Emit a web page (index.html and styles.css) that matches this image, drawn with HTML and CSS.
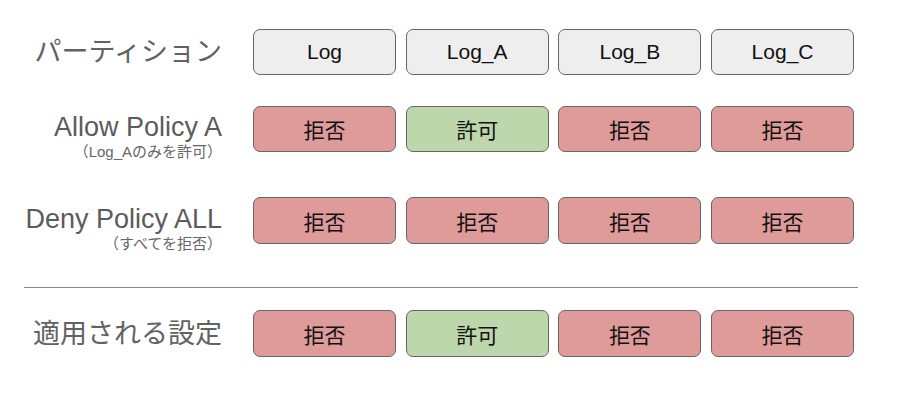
FILE: index.html
```html
<!DOCTYPE html>
<html lang="ja">
<head>
<meta charset="utf-8">
<link rel="stylesheet" href="styles.css">
</head>
<body>
<div class="page">
  <div class="row row-a">
    <div class="label"><span class="main jp">パーティション</span></div>
    <div class="cells">
      <div class="cell gray">Log</div>
      <div class="cell gray">Log_A</div>
      <div class="cell gray">Log_B</div>
      <div class="cell gray">Log_C</div>
    </div>
  </div>
  <div class="row row-b">
    <div class="label"><span class="main">Allow Policy A</span><span class="sub">（Log_Aのみを許可）</span></div>
    <div class="cells">
      <div class="cell red">拒否</div>
      <div class="cell green">許可</div>
      <div class="cell red">拒否</div>
      <div class="cell red">拒否</div>
    </div>
  </div>
  <div class="row row-c">
    <div class="label"><span class="main">Deny Policy ALL</span><span class="sub">（すべてを拒否）</span></div>
    <div class="cells">
      <div class="cell red">拒否</div>
      <div class="cell red">拒否</div>
      <div class="cell red">拒否</div>
      <div class="cell red">拒否</div>
    </div>
  </div>
  <div class="divider"></div>
  <div class="row row-d">
    <div class="label"><span class="main jp">適用される設定</span></div>
    <div class="cells">
      <div class="cell red">拒否</div>
      <div class="cell green">許可</div>
      <div class="cell red">拒否</div>
      <div class="cell red">拒否</div>
    </div>
  </div>
</div>
</body>
</html>
```

FILE: styles.css
```css
html, body {
  margin: 0;
  padding: 0;
  background: #ffffff;
}

.page {
  width: 900px;
  height: 397px;
  padding-top: 29px;
  box-sizing: border-box;
  font-family: "Liberation Sans", Arial, "Noto Sans CJK JP", sans-serif;
}

.row {
  display: flex;
  align-items: stretch;
  height: 46px;
}

.row-b { margin-top: 31px; }
.row-c { margin-top: 45px; height: 47px; }
.row-d { margin-top: 22px; height: 47px; }

.label {
  width: 222px;
  margin-right: 31px;
  display: flex;
  flex-direction: column;
  justify-content: center;
  align-items: flex-end;
  color: #5b5b5b;
}

.main {
  display: block;
  font-size: 27px;
  line-height: 30px;
  white-space: nowrap;
}

.main.jp {
  color: #626262;
}

.sub {
  display: block;
  font-size: 15px;
  line-height: 20px;
  margin-top: 0;
  margin-bottom: -16px;
  color: #666666;
  white-space: nowrap;
}

.cells {
  display: flex;
  gap: 9.7px;
}

.cell {
  width: 143px;
  box-sizing: border-box;
  border: 1px solid #666666;
  border-radius: 7px;
  display: flex;
  align-items: center;
  justify-content: center;
  font-size: 21px;
  color: #111111;
}

.gray { background: #eeeeee; }
.red { background: #df9b99; }
.green { background: #bdd6ac; }

.divider {
  margin: 43px 42px 0 24px;
  height: 1px;
  background: #8a8a8a;
}
```
